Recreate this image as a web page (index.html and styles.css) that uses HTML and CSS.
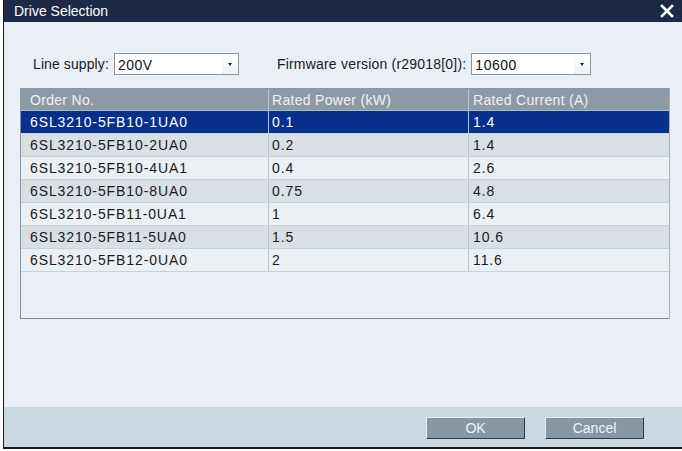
FILE: index.html
```html
<!DOCTYPE html>
<html>
<head>
<meta charset="utf-8">
<link rel="stylesheet" href="styles.css">
</head>
<body>
<div class="page">
  <div class="dialog">
    <div class="titlebar">
      <span class="title">Drive Selection</span>
      <svg class="close" width="14" height="14" viewBox="0 0 14 14"><path d="M2 2 L12 12 M12 2 L2 12" stroke="#fff" stroke-width="2.6" stroke-linecap="square"/></svg>
    </div>
    <div class="body">
      <div class="controls">
        <label class="lbl">Line supply:</label>
        <div class="select s1"><span class="val">200V</span><span class="arrow"></span></div>
        <label class="lbl fw">Firmware version (r29018[0]):</label>
        <div class="select s2"><span class="val">10600</span><span class="arrow"></span></div>
      </div>
      <div class="table">
        <div class="row head"><div class="c c1">Order No.</div><div class="c c2">Rated Power (kW)</div><div class="c c3">Rated Current (A)</div></div>
        <div class="row sel"><div class="c c1">6SL3210-5FB10-1UA0</div><div class="c c2">0.1</div><div class="c c3">1.4</div></div>
        <div class="row dark"><div class="c c1">6SL3210-5FB10-2UA0</div><div class="c c2">0.2</div><div class="c c3">1.4</div></div>
        <div class="row"><div class="c c1">6SL3210-5FB10-4UA1</div><div class="c c2">0.4</div><div class="c c3">2.6</div></div>
        <div class="row dark"><div class="c c1">6SL3210-5FB10-8UA0</div><div class="c c2">0.75</div><div class="c c3">4.8</div></div>
        <div class="row"><div class="c c1">6SL3210-5FB11-0UA1</div><div class="c c2">1</div><div class="c c3">6.4</div></div>
        <div class="row dark"><div class="c c1">6SL3210-5FB11-5UA0</div><div class="c c2">1.5</div><div class="c c3">10.6</div></div>
        <div class="row"><div class="c c1">6SL3210-5FB12-0UA0</div><div class="c c2">2</div><div class="c c3">11.6</div></div>
      </div>
    </div>
    <div class="footer">
      <button class="btn">OK</button>
      <button class="btn">Cancel</button>
    </div>
  </div>
</div>
</body>
</html>
```
FILE: styles.css
```css
html, body { margin: 0; padding: 0; }
body {
  width: 682px; height: 451px; overflow: hidden;
  background: #ffffff;
  font-family: "Liberation Sans", Arial, sans-serif;
}
.page { padding-left: 3px; height: 451px; box-sizing: border-box; }
.dialog {
  height: 449px;
  box-sizing: border-box;
  border-left: 1px solid #1a1a1a;
  border-bottom: 2px solid #1a1a1a;
  display: flex; flex-direction: column;
  background: #e9eff4;
}
.titlebar {
  height: 22px; flex: none;
  background: #1e2a45;
  display: flex; align-items: center; justify-content: space-between;
  padding: 0 8px 0 10px;
}
.title { color: #ffffff; font-size: 14px; letter-spacing: 0; }
.close { display: block; }
.body { flex: 1; padding: 31px 12px 0 16px; }
.controls { display: flex; align-items: center; height: 22px; padding-left: 13px; }
.lbl { font-size: 14px; color: #1a1a1a; letter-spacing: 0.1px; }
.fw { margin-left: 38px; letter-spacing: 0.2px; }
.select {
  height: 22px; box-sizing: border-box;
  border: 1px solid #8a96a0;
  background: #ffffff;
  display: flex; align-items: center; justify-content: space-between;
}
.s1 { width: 125px; margin-left: 5px; }
.s2 { width: 120px; margin-left: 5px; }
.val { font-size: 14px; color: #111; padding-left: 3px; padding-top: 2px; letter-spacing: 0.5px; }
.arrow {
  width: 16px; height: 20px;
  display: flex; align-items: center; justify-content: center;
  background: linear-gradient(#ffffff, #eef2f5);
}
.arrow::after {
  content: ""; width: 0; height: 0;
  border-left: 2px solid transparent; border-right: 2px solid transparent;
  border-top: 3px solid #222;
}
.table {
  margin-top: 13px;
  width: 650px; height: 231px; box-sizing: border-box;
  border: 1px solid #8a96a0;
  border-bottom: 1px solid #7d8a94;
  border-right: 1px solid #a7b2ba;
  background: #e9eff4;
}
.row { display: flex; height: 23px; box-sizing: border-box; border-bottom: 1px solid #c8d2d9; background: #eaf0f4; }
.row.dark { background: #d8e0e6; }
.row.head { background: #8c9aa6; border-bottom: 1px solid #b0bbc3; height: 22px; }
.row.head .c { color: #eef2f5; border-right-color: #b9c3cb; letter-spacing: 0.3px; }
.row.sel { background: #07308e; border-bottom-color: #c8d2d9; }
.row.sel .c { color: #ffffff; border-right-color: #b9c3cb; }
.c {
  font-size: 14px; color: #1a1a1a;
  padding-left: 9px; box-sizing: border-box;
  display: flex; align-items: center;
  border-right: 1px solid #bcc6ce;
  letter-spacing: 0.9px;
}
.c1 { width: 248px; }
.c2 { width: 200px; padding-left: 3px; }
.c3 { flex: 1; border-right: none; padding-left: 4px; }
.footer {
  height: 40px; flex: none;
  background: #cbd8e0;
  display: flex; align-items: flex-start; justify-content: flex-end;
  padding: 10px 38px 0 0; gap: 20px;
  box-sizing: border-box;
}
.btn {
  width: 99px; height: 22px; box-sizing: border-box;
  background: #8797a5;
  border: 1px solid;
  border-color: #e6edf2 #2f3a44 #2f3a44 #e6edf2;
  color: #f0f4f7;
  font-family: "Liberation Sans", Arial, sans-serif;
  font-size: 14px; padding: 0;
}
```
